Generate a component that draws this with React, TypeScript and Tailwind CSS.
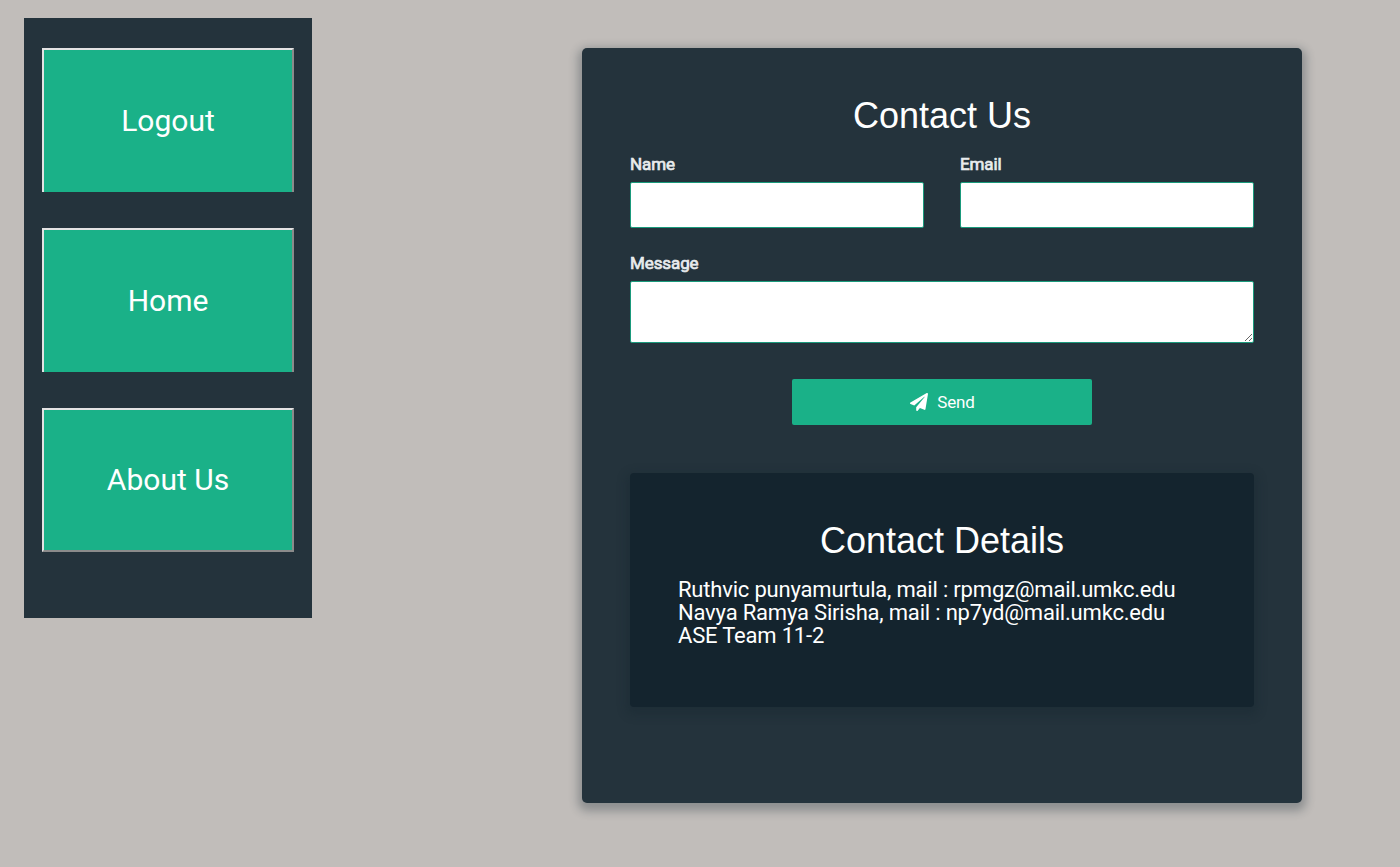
import { FaPaperPlane } from "react-icons/fa";

const links = ["Logout", "Home", "About Us"];

function Caption({ children }: { children: string }) {
  return (
    <span className="block h-7 text-[17px] leading-[20px] font-normal tracking-[-0.1px] text-[#e8ebed] [-webkit-text-stroke:0.7px_#e8ebed]">
      {children}
    </span>
  );
}

function Field({ label }: { label: string }) {
  return (
    <label className="block flex-1">
      <Caption>{label}</Caption>
      <input className="block h-[46px] w-full rounded-[2px] border border-[#1a9a7c] bg-white px-3 outline-none" />
    </label>
  );
}

export default function App() {
  return (
    <div className="flex h-[867px] items-start bg-[#c1bdba] pl-6 font-['Roboto',sans-serif] text-white">
      <nav className="mt-[18px] flex h-[600px] w-[288px] shrink-0 flex-col gap-9 bg-[#24333c] px-[18px] pt-[30px]">
        {links.map((l) => (
          <button
            key={l}
            className="h-36 w-full shrink-0 border-2 border-t-[#e3e3e3] border-r-[#8b8b8b] border-b-[#8b8b8b] border-l-[#e3e3e3] bg-[#1ab188] text-[30px] leading-none not-last:border-b-0"
          >
            {l}
          </button>
        ))}
      </nav>
      <main className="mt-12 ml-[270px] h-[755px] w-[720px] shrink-0 rounded-[5px] bg-[#24333c] px-12 pt-12 shadow-[0_4px_10px_4px_rgba(19,35,47,0.3)]">
        <h1 className="h-[58px] text-center font-['Liberation_Sans',sans-serif] text-[36px] leading-[40px]">Contact Us</h1>
        <div className="flex gap-9">
          <Field label="Name" />
          <Field label="Email" />
        </div>
        <label className="mt-[25px] block">
          <Caption>Message</Caption>
          <textarea className="block h-[62px] w-full resize-y rounded-[2px] border border-[#1a9a7c] bg-white px-3 outline-none" />
        </label>
        <button className="mx-auto mt-9 flex h-[46px] w-[300px] items-center justify-center gap-[9px] rounded-[2px] bg-[#1ab188] pl-px text-[17px] tracking-[-0.1px]">
          <FaPaperPlane size={18} />
          <span className="pt-px">Send</span>
        </button>
        <section className="mt-12 h-[234px] rounded bg-[#14242e] px-12 pt-12 shadow-[0_4px_10px_4px_rgba(19,35,47,0.3)]">
          <h2 className="h-[57px] text-center font-['Liberation_Sans',sans-serif] text-[36px] leading-[40px]">Contact Details</h2>
          <p className="text-[22px] leading-[23px] tracking-[-0.19px]">
            Ruthvic punyamurtula, mail : rpmgz@mail.umkc.edu
            <br />
            Navya Ramya Sirisha, mail : np7yd@mail.umkc.edu
            <br />
            ASE Team 11-2
          </p>
        </section>
      </main>
    </div>
  );
}
